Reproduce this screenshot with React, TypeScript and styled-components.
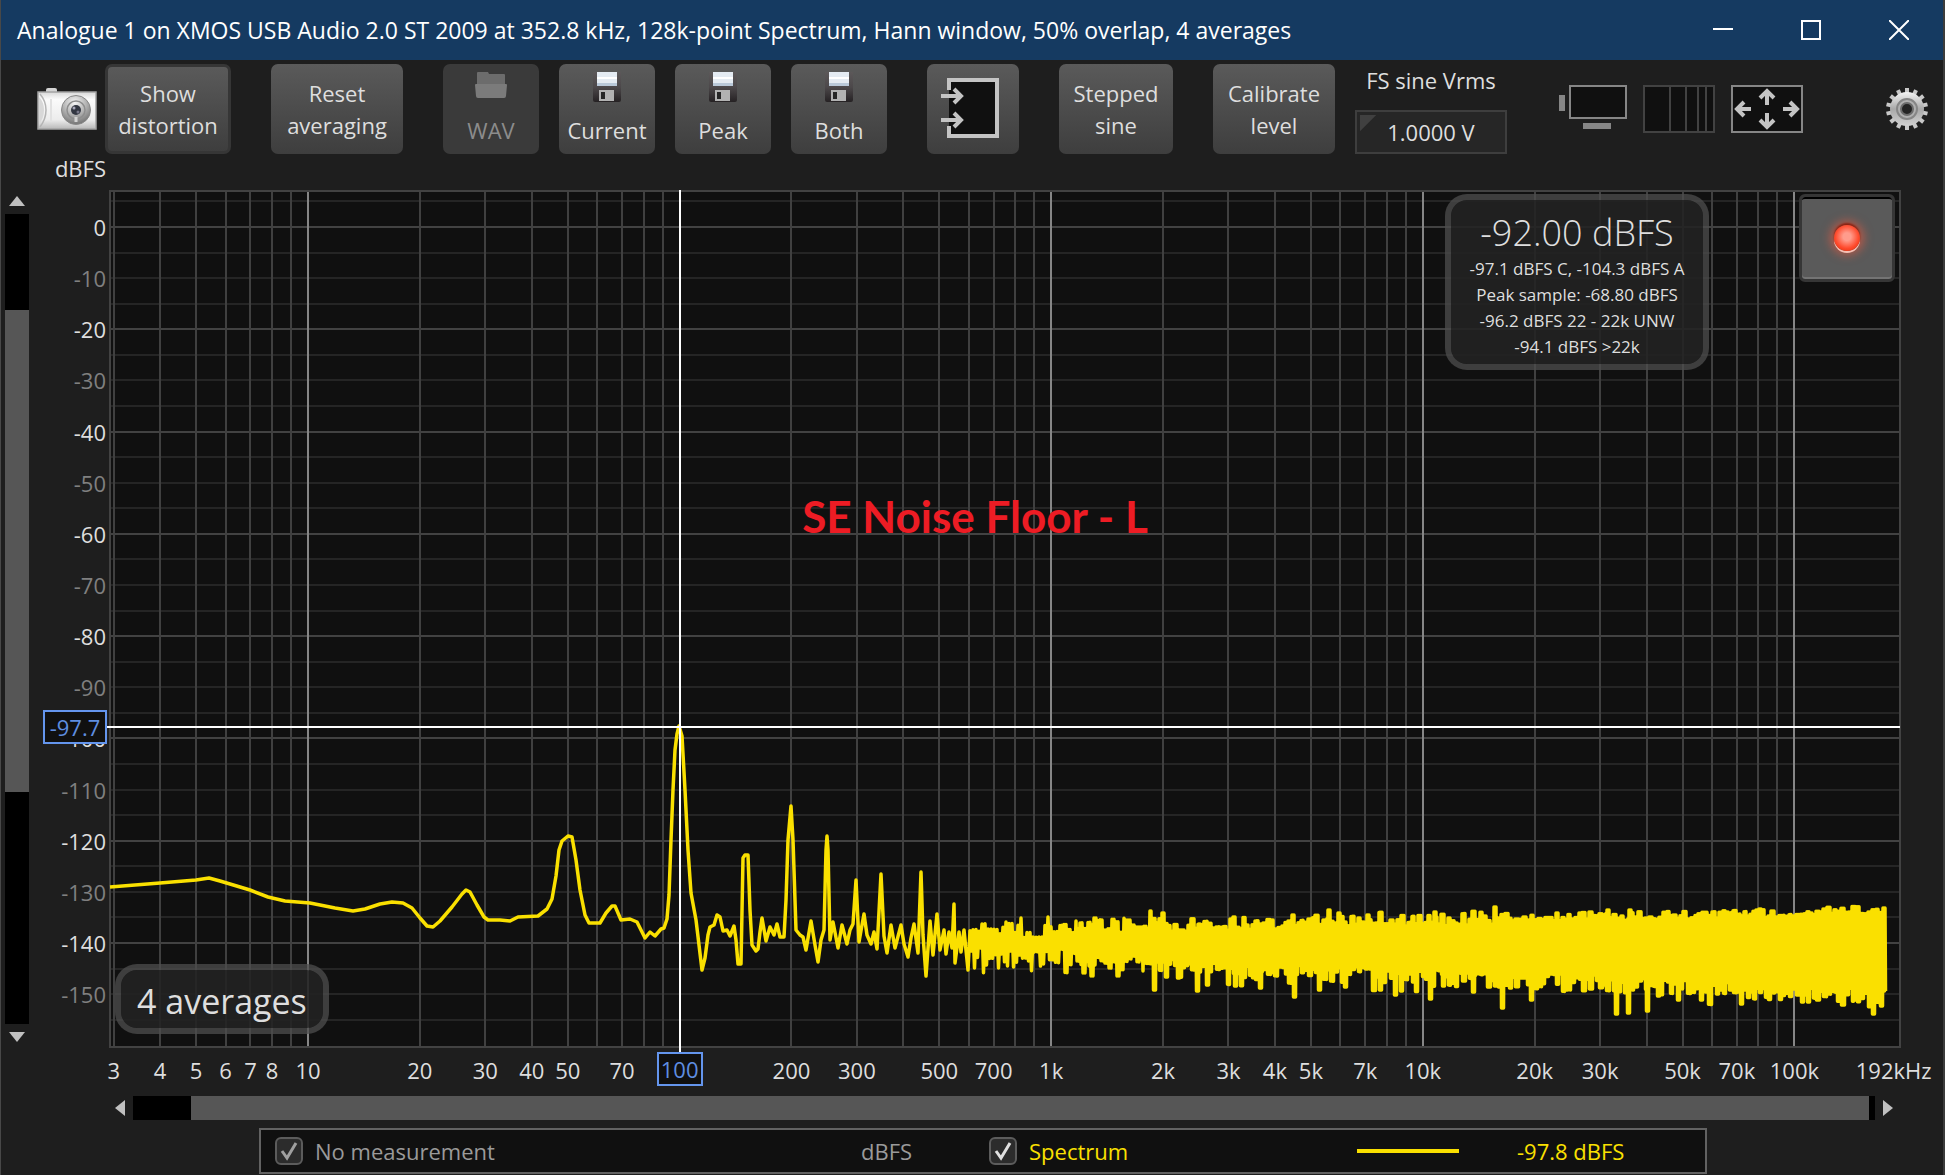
import React from "react";
import styled, { createGlobalStyle, css } from "styled-components";

const GlobalStyle = createGlobalStyle`
  *, *::before, *::after { box-sizing: border-box; }
  body { margin: 0; background: #1e1e1e; }
  button, input { font: inherit; color: inherit; }
`;

/* ---------- scales ---------- */

const PLOT_W = 1792;
const PLOT_H = 858;
const DECADE = 371.6;
const PX_PER_DB = 5.114;
const fx = (f: number) => 199 + DECADE * Math.log10(f / 10);
const dy = (db: number) => 37 - PX_PER_DB * db;
const pctX = (f: number) => `${(fx(f) / PLOT_W) * 100}%`;
const pctY = (db: number) => `${(dy(db) / PLOT_H) * 100}%`;

const FREQ_LABELS: [number, string][] = [
  [3, "3"], [4, "4"], [5, "5"], [6, "6"], [7, "7"], [8, "8"], [10, "10"], [20, "20"], [30, "30"],
  [40, "40"], [50, "50"], [70, "70"], [200, "200"], [300, "300"], [500, "500"], [700, "700"],
  [1000, "1k"], [2000, "2k"], [3000, "3k"], [4000, "4k"], [5000, "5k"], [7000, "7k"],
  [10000, "10k"], [20000, "20k"], [30000, "30k"], [50000, "50k"], [70000, "70k"],
  [100000, "100k"], [185000, "192kHz"],
];
const DB_LABELS = Array.from({ length: 16 }, (_, i) => -10 * i);

const V_LINES: number[] = [];
for (let d = 1; d <= 100000; d *= 10) {
  for (let m = 1; m < 10; m++) {
    const f = m * d;
    if (f >= 3 && f <= 190000) V_LINES.push(f);
  }
}
const H_LINES = Array.from({ length: 33 }, (_, i) => 5 - 5 * i);

/* ---------- spectrum trace (window coordinates, shifted to the plot) ---------- */

const LOW_BAND: [number, number][] = [
  [110, 887], [160, 883], [196, 880], [209, 878], [220, 881], [250, 890], [268, 897], [285, 901],
  [310, 903], [335, 908], [353, 911], [365, 909], [380, 904], [392, 902], [403, 903], [412, 908],
  [420, 918], [427, 926], [433, 927], [440, 921], [452, 907], [462, 894], [466, 890], [470, 892],
  [477, 905], [484, 917], [488, 920], [500, 920], [510, 921], [518, 917], [538, 916], [547, 909],
  [552, 899], [556, 876], [559, 850], [562, 841], [568, 836], [572, 837], [576, 860], [580, 890],
  [585, 915], [589, 923], [600, 923], [606, 913], [612, 906], [615, 906], [621, 920], [630, 919],
  [637, 922], [641, 930], [645, 938], [650, 932], [655, 936], [661, 929], [664, 928], [667, 919],
  [669, 895], [671, 840], [673, 790], [675, 750], [677, 734], [679, 726], [682, 736], [685, 790],
  [688, 850], [691, 893], [696, 920], [699, 945], [702, 970], [705, 958], [708, 935], [710, 927],
  [714, 925], [717, 915], [720, 917], [723, 931], [727, 930], [730, 936], [734, 926], [736, 940],
  [738, 964], [741, 964], [743, 858], [745, 855], [748, 855], [750, 910], [752, 945], [756, 951],
  [758, 949], [760, 932], [762, 918], [766, 941], [770, 927], [774, 935], [777, 924], [780, 937],
  [784, 937], [786, 900], [788, 840], [791, 806], [793, 840], [796, 930], [800, 935], [803, 937],
  [806, 950], [811, 921], [815, 945], [818, 962], [821, 940], [824, 930], [826, 850], [827, 836],
  [828, 850], [830, 940], [833, 922], [838, 948], [842, 925], [847, 944], [850, 930], [853, 924],
  [856, 880], [859, 942], [862, 925], [864, 914], [867, 935], [871, 944], [874, 932], [877, 949],
  [881, 874], [884, 936], [887, 953], [891, 925], [895, 948], [901, 925], [904, 944], [908, 957],
  [911, 938], [914, 924], [918, 953], [921, 872], [923, 935], [926, 976], [930, 921], [933, 955],
  [937, 914], [940, 950], [944, 930], [946, 954], [949, 932], [952, 948], [954, 904], [955, 963],
  [959, 932], [961, 952], [964, 930], [968, 970],
];

type Pt = [number, number];
const TOP_ENVELOPE: Pt[] = [[946, 932], [985, 929], [1050, 931], [1100, 926], [1200, 924], [1300, 921], [1424, 919], [1600, 916], [1700, 916], [1800, 912], [1888, 910]];
const BOTTOM_ENVELOPE: Pt[] = [[946, 953], [985, 956], [1050, 954], [1100, 961], [1200, 969], [1300, 972], [1424, 977], [1600, 983], [1700, 989], [1800, 993], [1888, 996]];
const TOP_SPIKES: Pt[] = [[1007, 921], [1021, 917], [1048, 916], [1076, 920], [1095, 917], [1102, 919], [1127, 919], [1150, 910], [1163, 912], [1293, 914], [1329, 909], [1368, 914], [1435, 911], [1495, 906], [1580, 912], [1608, 909], [1630, 909]];
const BOTTOM_SPIKES: Pt[] = [[972, 970], [985, 967], [996, 970], [1005, 968], [1013, 969], [1028, 963], [1042, 966], [1083, 975], [1091, 978], [1117, 978], [1142, 973], [1154, 992], [1166, 979], [1178, 980], [1197, 993], [1207, 987], [1235, 988], [1260, 990], [1294, 999], [1319, 992], [1380, 992], [1401, 993], [1430, 1001], [1443, 988], [1473, 994], [1502, 1010], [1531, 1002], [1616, 1016], [1628, 1015], [1647, 1013], [1658, 998], [1678, 1002], [1701, 1002], [1741, 1006], [1802, 1004], [1808, 1004], [1855, 1002], [1873, 1016], [1881, 1008]];

const lerp = (pts: Pt[], x: number) => {
  for (let i = 1; i < pts.length; i++) {
    if (x <= pts[i][0]) {
      const [x0, y0] = pts[i - 1];
      const [x1, y1] = pts[i];
      return y0 + ((y1 - y0) * (x - x0)) / (x1 - x0);
    }
  }
  return pts[pts.length - 1][1];
};

const buildTrace = () => {
  let seed = 20090;
  const rand = () => {
    seed = (seed * 1103515245 + 12345) % 2147483648;
    return seed / 2147483648;
  };
  const pts: Pt[] = [...LOW_BAND];
  let x = 970;
  let topJ = 0;
  let botJ = 0;
  let held = 0;
  while (x < 1886) {
    if (held <= 0) {
      topJ = (rand() - 0.5) * (x < 1500 ? 15 : 9);
      botJ = (rand() - 0.5) * 16 + (rand() > 0.75 ? rand() * 12 : 0);
      held = 2 + rand() * 2;
    }
    const near = (s: Pt[]) => s.find(([sx]) => Math.abs(sx - x) <= 1.5);
    const t = near(TOP_SPIKES);
    const b = near(BOTTOM_SPIKES);
    const step = x < 1060 ? 3 : x < 1150 ? 2 : 1;
    pts.push([x, t ? t[1] + 1 : lerp(TOP_ENVELOPE, x) + topJ]);
    pts.push([x + step / 2, b ? b[1] - 2 : lerp(BOTTOM_ENVELOPE, x) + botJ]);
    x += step;
    held -= step;
  }
  return pts.map(([px, py], i) => `${i ? "L" : "M"}${(px - 109).toFixed(1)} ${(py - 190).toFixed(1)}`).join("");
};
const TRACE = buildTrace();

/* ---------- layout ---------- */

const Window = styled.div`
  display: flex;
  flex-direction: column;
  min-height: 100vh;
  padding-bottom: 1px;
  background: #1e1e1e;
  border-left: 1px solid #484848;
  border-right: 2px solid #3c3c3c;
  color: #dedede;
  font-family: "Open Sans", "Noto Sans", sans-serif;
  font-size: 22px;
  line-height: 32px;
`;

const TitleBar = styled.header`
  display: flex;
  align-items: center;
  justify-content: space-between;
  height: 60px;
  padding: 0 24px 0 16px;
  background: #153a61;
  color: #fff;
`;

const Title = styled.h1`
  margin: 0;
  font-size: 23px;
  font-weight: 400;
  white-space: nowrap;
`;

const WindowButtons = styled.div`
  display: flex;
  gap: 48px;
`;

const IconButton = styled.button`
  display: flex;
  align-items: center;
  justify-content: center;
  flex: none;
  padding: 0;
  border: 0;
  background: none;
`;

const WindowButton = styled(IconButton)`
  width: 40px;
  height: 40px;
`;

const Toolbar = styled.div`
  display: flex;
  align-items: center;
  gap: 40px;
  padding: 4px 14px 0 36px;
`;

const ToolGroup = styled.div<{ $gap: number }>`
  display: flex;
  align-items: center;
  gap: ${(p) => p.$gap}px;
`;

const ToolButton = styled.button<{ $width: number; $pressed?: boolean }>`
  display: flex;
  flex-direction: column;
  align-items: center;
  justify-content: center;
  flex: none;
  width: ${(p) => p.$width}px;
  height: 90px;
  padding: 0;
  border: 0;
  border-radius: 7px;
  background: linear-gradient(#5a5a5a, #3e3e3e);
  white-space: nowrap;
  ${(p) => p.$pressed && css`
    border: 3px solid #363636;
  `}
  &:disabled {
    background: #3a3a3a;
    color: #8c8c8c;
  }
`;

const IconSlot = styled.span`
  display: flex;
  height: 42px;
  align-items: flex-start;
`;

const Field = styled.div`
  display: flex;
  flex-direction: column;
  align-items: center;
  gap: 12px;
  width: 152px;
  height: 90px;
`;

const FieldLabel = styled.label`
  height: 34px;
  white-space: nowrap;
`;

const FieldInput = styled.input`
  width: 152px;
  height: 44px;
  padding: 0;
  border: 2px solid #3e3e3e;
  background: linear-gradient(135deg, #404040 11px, transparent 12px) 3px 3px / 100% 100% no-repeat, #262626;
  text-align: center;
`;

const ViewTools = styled.div`
  display: flex;
  align-items: center;
  flex: 1;
  gap: 16px;
  padding-left: 12px;
  > :last-child { margin-left: auto; }
`;

const UnitLabel = styled.div`
  width: 107px;
  height: 36px;
  padding-right: 2px;
  text-align: right;
  line-height: 28px;
`;

const ChartGrid = styled.main`
  display: grid;
  flex: 1;
  grid-template-columns: 24px 80px minmax(0, 1fr);
  grid-template-rows: minmax(400px, 1fr) 48px 24px;
  padding: 0 42px 8px 4px;
`;

const VerticalScroll = styled.div`
  display: flex;
  flex-direction: column;
  align-items: center;
  justify-content: space-between;
  gap: 8px;
  padding: 6px 0;
`;

const HorizontalScroll = styled.div`
  display: flex;
  grid-column: 3;
  align-items: center;
  gap: 8px;
  padding: 0 8px 0 6px;
`;

const VerticalTrack = styled.div`
  flex: 1;
  width: 24px;
  padding: 96px 0 232px;
  background: #000;
`;

const HorizontalTrack = styled.div`
  flex: 1;
  height: 24px;
  padding: 0 6px 0 58px;
  background: #000;
`;

const Thumb = styled.div`
  width: 100%;
  height: 100%;
  background: #565656;
`;

const YAxis = styled.div`
  position: relative;
`;

const XAxis = styled.div`
  position: relative;
  grid-column: 3;
`;

const YTick = styled.span<{ $dim: boolean }>`
  position: absolute;
  right: 3px;
  transform: translateY(-50%);
  color: ${(p) => (p.$dim ? "#808080" : "#dedede")};
`;

const XTick = styled.span`
  position: absolute;
  top: 6px;
  transform: translateX(-50%);
  white-space: nowrap;
`;

const cursorTag = css`
  position: absolute;
  border: 2px solid #6495ed;
  background: #101010;
  color: #5f8ee0;
  line-height: 30px;
  text-align: center;
`;

const YCursorTag = styled.output`
  ${cursorTag}
  right: 2px;
  width: 64px;
  transform: translateY(-50%);
`;

const XCursorTag = styled.output`
  ${cursorTag}
  top: 4px;
  width: 46px;
  transform: translateX(-50%);
`;

const Plot = styled.section`
  position: relative;
  background: #101010;
`;

const PlotSvg = styled.svg`
  position: absolute;
  inset: 0;
  width: 100%;
  height: 100%;
  overflow: visible;
`;

const Caption = styled.h2`
  position: absolute;
  inset: 0 60px 206px 0;
  display: flex;
  align-items: center;
  justify-content: center;
  margin: 0;
  color: #ed1c24;
  font: 700 44px/50px Lato, "Open Sans", sans-serif;
  white-space: nowrap;
`;

const Badge = styled.div`
  position: absolute;
  border: 6px solid rgba(78, 78, 78, 0.75);
  border-radius: 22px;
  background: rgba(34, 34, 34, 0.88);
  background-clip: padding-box;
  text-align: center;
  white-space: nowrap;
`;

const LevelBadge = styled(Badge)`
  top: 4px;
  right: 192px;
  width: 264px;
  height: 176px;
  padding-top: 12px;
  font-size: 17px;
  line-height: 26px;
`;

const LevelMain = styled.div`
  height: 44px;
  font-size: 36px;
  font-weight: 300;
  line-height: 42px;
`;

const AveragesBadge = styled(Badge)`
  left: 6px;
  bottom: 14px;
  padding: 8px 16px 4px;
  font-size: 34px;
  line-height: 46px;
`;

const RecordButton = styled.button`
  position: absolute;
  top: 4px;
  right: 6px;
  display: flex;
  align-items: center;
  justify-content: center;
  width: 96px;
  height: 88px;
  padding: 0;
  border: 3px solid #363636;
  border-radius: 6px;
  background: #5a5a5a;
  box-shadow: inset 0 3px 0 -1px #000, inset 0 -2px 0 #747474;
`;

const Led = styled.span`
  width: 26px;
  height: 26px;
  border-radius: 50%;
  background: radial-gradient(circle at 50% 45%, #ff9c8c 0 20%, #ff4a2c 60%, #d82400 100%);
  box-shadow: 0 2px 0 0 #f5c0b4, 0 -2px 2px 0 #8a2010, 0 0 10px 4px rgba(255, 90, 60, 0.55);
`;

const Legend = styled.footer`
  display: grid;
  grid-template-columns: 586px 128px 368px 160px auto;
  align-items: center;
  align-self: center;
  width: 1448px;
  height: 46px;
  margin-left: 22px;
  padding: 0 14px;
  border: 2px solid #626262;
  background: #101010;
`;

const LegendItem = styled.label<{ $tone: "dim" | "trace" }>`
  display: flex;
  align-items: center;
  gap: 12px;
  color: ${(p) => (p.$tone === "dim" ? "#9a9a9a" : "#fae000")};
`;

const LegendValue = styled.span<{ $tone: "dim" | "trace" }>`
  color: ${(p) => (p.$tone === "dim" ? "#9a9a9a" : "#fae000")};
`;

const CheckFrame = styled.span`
  position: relative;
  display: flex;
  width: 28px;
  height: 28px;
`;

const CheckInput = styled.input`
  appearance: none;
  width: 28px;
  height: 28px;
  margin: 0;
  border: 2px solid #5c5c5c;
  border-radius: 6px;
  background: #2c2c2c;
`;

const CheckMark = styled.svg`
  position: absolute;
  inset: 0;
  pointer-events: none;
`;

const TraceSwatch = styled.div`
  width: 102px;
  height: 4px;
  background: #fae000;
`;

/* ---------- icons ---------- */

const CameraIcon = () => (
  <svg width="60" height="44" viewBox="0 0 60 44">
    <defs>
      <linearGradient id="camBody" x1="0" y1="0" x2="0" y2="1">
        <stop offset="0" stopColor="#d8d8d8" />
        <stop offset="0.2" stopColor="#fbfbfb" />
        <stop offset="0.75" stopColor="#ececec" />
        <stop offset="1" stopColor="#b8b8b8" />
      </linearGradient>
      <radialGradient id="camLens" cx="0.45" cy="0.25" r="0.8">
        <stop offset="0" stopColor="#f6f6f6" />
        <stop offset="0.5" stopColor="#b4b4b4" />
        <stop offset="1" stopColor="#6c6c6c" />
      </radialGradient>
    </defs>
    <rect x="9" y="1" width="11" height="6" rx="2" fill="#d4d4d4" />
    <rect x="1" y="5" width="58" height="37" fill="url(#camBody)" stroke="#a4a4a4" strokeWidth="1.5" />
    <path d="M2 10Q7 15 7 23T2 37Z" fill="#d8d8d8" />
    <path d="M3 7Q9 14 9 23T3 40" fill="none" stroke="#b4b4b4" strokeWidth="1.5" />
    <path d="M14 12v23" stroke="#e2e2e2" strokeWidth="2" />
    <circle cx="39" cy="23" r="14.5" fill="url(#camLens)" stroke="#888" />
    <circle cx="39" cy="23" r="9" fill="none" stroke="#8e8e8e" strokeWidth="1.5" />
    <circle cx="39" cy="23" r="5" fill="#333742" />
    <circle cx="37" cy="21" r="1.5" fill="#aab" />
    <circle cx="41" cy="25" r="1.5" fill="#778" />
    <path d="M39 30v5" stroke="#d4d4d4" strokeWidth="3" />
  </svg>
);

const FolderIcon = () => (
  <svg width="32" height="28" viewBox="0 0 32 28">
    <path d="M2 1q0-1 1-1h10l1 2h15q1 0 1 1v12H2z" fill="#6c6c6c" />
    <path d="M0 13q0-1 1-1h30q1 0 1 1l-1 11q0 2-2 2H3q-2 0-2-2z" fill="#7b7b7b" />
  </svg>
);

const FloppyIcon = () => (
  <svg width="28" height="30" viewBox="0 0 28 30">
    <defs>
      <linearGradient id="disk" x1="0" y1="0" x2="0" y2="1">
        <stop offset="0" stopColor="#5c5859" />
        <stop offset="0.5" stopColor="#4c484a" />
        <stop offset="1" stopColor="#262224" />
      </linearGradient>
    </defs>
    <path d="M0 0h28v28q0 2-2 2H2q-2 0-2-2z" fill="url(#disk)" />
    <rect x="4" y="0" width="20" height="14" fill="#e4ebf2" />
    <path d="M4 5h20v2H4z" fill="#fff" />
    <path d="M4 11h20v3H4z" fill="#b9c8d8" />
    <rect x="6" y="18" width="15" height="11" fill="#b2b2b2" />
    <rect x="8" y="20" width="4" height="7" fill="#262626" />
  </svg>
);

const InputIcon = () => (
  <svg width="64" height="62" viewBox="0 0 64 62">
    <path d="M8 2H56V58H8Z" fill="#101010" />
    <path d="M8 12V2H56V58H8V48" fill="none" stroke="#c4c4c4" strokeWidth="4" />
    <g fill="none" stroke="#c4c4c4" strokeWidth="4">
      <path d="M0 18H20M13 11l7 7-7 7" />
      <path d="M0 42H20M13 35l7 7-7 7" />
    </g>
  </svg>
);

const MonitorIcon = () => (
  <svg width="68" height="48" viewBox="0 0 68 48">
    <path d="M0 10h6v16H0zM24 38h28v6H24z" fill="#868686" />
    <rect x="11" y="1" width="56" height="32" fill="#101010" stroke="#868686" strokeWidth="2" />
  </svg>
);

const LogGridIcon = () => (
  <svg width="72" height="48" viewBox="0 0 72 48">
    <rect x="1" y="1" width="70" height="46" fill="#101010" stroke="#424242" strokeWidth="2" />
    <path d="M27 1V47M43 1V47M55 1V47M63 1V47" stroke="#424242" strokeWidth="2" />
  </svg>
);

const MoveIcon = () => (
  <svg width="72" height="48" viewBox="0 0 72 48">
    <rect x="1" y="1" width="70" height="46" fill="#101010" stroke="#868686" strokeWidth="2" />
    <g fill="none" stroke="#c4c4c4" strokeWidth="4">
      <path d="M36 20V6M29 13l7-7 7 7" />
      <path d="M36 28V42M29 35l7 7 7-7" />
      <path d="M20 24H6M13 17l-7 7 7 7" />
      <path d="M52 24H66M59 17l7 7-7 7" />
    </g>
  </svg>
);

const GearIcon = () => (
  <svg width="44" height="44" viewBox="0 0 44 44">
    <defs>
      <linearGradient id="gear" x1="0" y1="0" x2="0" y2="1">
        <stop offset="0" stopColor="#f4f4f4" />
        <stop offset="0.5" stopColor="#a8a8a8" />
        <stop offset="1" stopColor="#d0d0d0" />
      </linearGradient>
    </defs>
    <g stroke="#c8c8c8" strokeWidth="4">
      {Array.from({ length: 14 }, (_, i) => (
        <path key={i} d="M22 1V8" transform={`rotate(${(i * 360) / 14} 22 22)`} />
      ))}
    </g>
    <circle cx="22" cy="22" r="17" fill="url(#gear)" />
    <circle cx="22" cy="22" r="10" fill="#b0b0b0" stroke="#868686" strokeWidth="2" />
    <circle cx="22" cy="22" r="6" fill="#242424" stroke="#6c6c6c" strokeWidth="2" />
  </svg>
);

const Arrow = ({ d, w, h }: { d: string; w: number; h: number }) => (
  <svg width={w} height={h} viewBox={`0 0 ${w} ${h}`}>
    <path d={d} fill="#c0c0c0" />
  </svg>
);

const Check = ({ id, disabled, tone }: { id: string; disabled?: boolean; tone: string }) => (
  <CheckFrame>
    <CheckInput id={id} type="checkbox" defaultChecked disabled={disabled} />
    <CheckMark width="28" height="28" viewBox="0 0 28 28">
      <path d="M7 14l5 7L21 6" fill="none" stroke={tone} strokeWidth="3" />
    </CheckMark>
  </CheckFrame>
);

/* ---------- page ---------- */

const SAVE_BUTTONS = ["Current", "Peak", "Both"];

export default function App() {
  return (
    <>
      <GlobalStyle />
      <Window>
        <TitleBar>
          <Title>
            Analogue 1 on XMOS USB Audio 2.0 ST 2009 at 352.8 kHz, 128k-point Spectrum, Hann window, 50% overlap, 4 averages
          </Title>
          <WindowButtons>
            <WindowButton aria-label="Minimize">
              <svg width="20" height="20" viewBox="0 0 20 20"><path d="M0 9H20" stroke="#fff" strokeWidth="2" /></svg>
            </WindowButton>
            <WindowButton aria-label="Maximize">
              <svg width="20" height="20" viewBox="0 0 20 20"><rect x="1" y="1" width="18" height="18" fill="none" stroke="#fff" strokeWidth="2" /></svg>
            </WindowButton>
            <WindowButton aria-label="Close">
              <svg width="20" height="20" viewBox="0 0 20 20"><path d="M0 0L20 20M20 0L0 20" stroke="#fff" strokeWidth="2" /></svg>
            </WindowButton>
          </WindowButtons>
        </TitleBar>

        <Toolbar>
          <ToolGroup $gap={8}>
            <IconButton aria-label="Capture image"><CameraIcon /></IconButton>
            <ToolButton $width={126} $pressed><span>Show</span><span>distortion</span></ToolButton>
          </ToolGroup>
          <ToolButton $width={132}><span>Reset</span><span>averaging</span></ToolButton>
          <ToolGroup $gap={20}>
            <ToolButton $width={96} disabled><IconSlot><FolderIcon /></IconSlot><span>WAV</span></ToolButton>
            {SAVE_BUTTONS.map((name) => (
              <ToolButton key={name} $width={96}><IconSlot><FloppyIcon /></IconSlot><span>{name}</span></ToolButton>
            ))}
          </ToolGroup>
          <ToolButton $width={92} aria-label="Input routing"><InputIcon /></ToolButton>
          <ToolButton $width={114}><span>Stepped</span><span>sine</span></ToolButton>
          <ToolGroup $gap={20}>
            <ToolButton $width={122}><span>Calibrate</span><span>level</span></ToolButton>
            <Field>
              <FieldLabel htmlFor="vrms">FS sine Vrms</FieldLabel>
              <FieldInput id="vrms" type="text" defaultValue="1.0000 V" />
            </Field>
          </ToolGroup>
          <ViewTools>
            <IconButton aria-label="Scrollbars"><MonitorIcon /></IconButton>
            <IconButton aria-label="Frequency axis"><LogGridIcon /></IconButton>
            <IconButton aria-label="Axis limits"><MoveIcon /></IconButton>
            <IconButton aria-label="Settings"><GearIcon /></IconButton>
          </ViewTools>
        </Toolbar>

        <UnitLabel>dBFS</UnitLabel>

        <ChartGrid>
          <VerticalScroll>
            <IconButton aria-label="Scroll up"><Arrow w={16} h={10} d="M0 10L8 0L16 10Z" /></IconButton>
            <VerticalTrack><Thumb /></VerticalTrack>
            <IconButton aria-label="Scroll down"><Arrow w={16} h={10} d="M0 0L8 10L16 0Z" /></IconButton>
          </VerticalScroll>

          <YAxis>
            {DB_LABELS.map((db) => (
              <YTick key={db} $dim={db % 20 !== 0} style={{ top: pctY(db) }}>{db}</YTick>
            ))}
            <YCursorTag style={{ top: pctY(-97.7) }}>-97.7</YCursorTag>
          </YAxis>

          <Plot aria-label="Spectrum">
            <PlotSvg viewBox={`0 0 ${PLOT_W} ${PLOT_H}`} preserveAspectRatio="none">
              <g strokeWidth="2">
                {H_LINES.map((db) => {
                  const y = Math.round(dy(db));
                  return <path key={db} d={`M0 ${y}H${PLOT_W}`} stroke={db % 20 === 0 ? "#424242" : "#252525"} />;
                })}
                {V_LINES.map((f) => {
                  const x = Math.round(fx(f));
                  const decade = Number.isInteger(Math.log10(f));
                  return <path key={f} d={`M${x} 0V${PLOT_H}`} stroke={decade ? "#868686" : "#404040"} />;
                })}
                <rect x="1" y="1" width={PLOT_W - 2} height={PLOT_H - 2} fill="none" stroke="#424242" />
              </g>
              <path d={TRACE} fill="none" stroke="#fae000" strokeWidth="3.5" strokeLinejoin="round" />
              <path d={`M${Math.round(fx(100))} 0V862M-2 ${Math.round(dy(-97.7))}H${PLOT_W - 1}`} stroke="#fff" strokeWidth="2" />
            </PlotSvg>
            <Caption>SE Noise Floor - L</Caption>
            <LevelBadge>
              <LevelMain>-92.00 dBFS</LevelMain>
              <div>-97.1 dBFS C, -104.3 dBFS A</div>
              <div>Peak sample: -68.80 dBFS</div>
              <div>-96.2 dBFS 22 - 22k UNW</div>
              <div>-94.1 dBFS &gt;22k</div>
            </LevelBadge>
            <RecordButton aria-label="Record"><Led /></RecordButton>
            <AveragesBadge>4 averages</AveragesBadge>
          </Plot>

          <XAxis>
            {FREQ_LABELS.map(([f, text]) => (
              <XTick key={text} style={{ left: pctX(f) }}>{text}</XTick>
            ))}
            <XCursorTag style={{ left: pctX(100) }}>100</XCursorTag>
          </XAxis>

          <HorizontalScroll>
            <IconButton aria-label="Scroll left"><Arrow w={10} h={16} d="M10 0L0 8L10 16Z" /></IconButton>
            <HorizontalTrack><Thumb /></HorizontalTrack>
            <IconButton aria-label="Scroll right"><Arrow w={10} h={16} d="M0 0L10 8L0 16Z" /></IconButton>
          </HorizontalScroll>
        </ChartGrid>

        <Legend>
          <LegendItem $tone="dim" htmlFor="trace-none">
            <Check id="trace-none" disabled tone="#a0a0a0" />
            No measurement
          </LegendItem>
          <LegendValue $tone="dim">dBFS</LegendValue>
          <LegendItem $tone="trace" htmlFor="trace-spectrum">
            <Check id="trace-spectrum" tone="#e0e0e0" />
            Spectrum
          </LegendItem>
          <TraceSwatch />
          <LegendValue $tone="trace">-97.8 dBFS</LegendValue>
        </Legend>
      </Window>
    </>
  );
}
